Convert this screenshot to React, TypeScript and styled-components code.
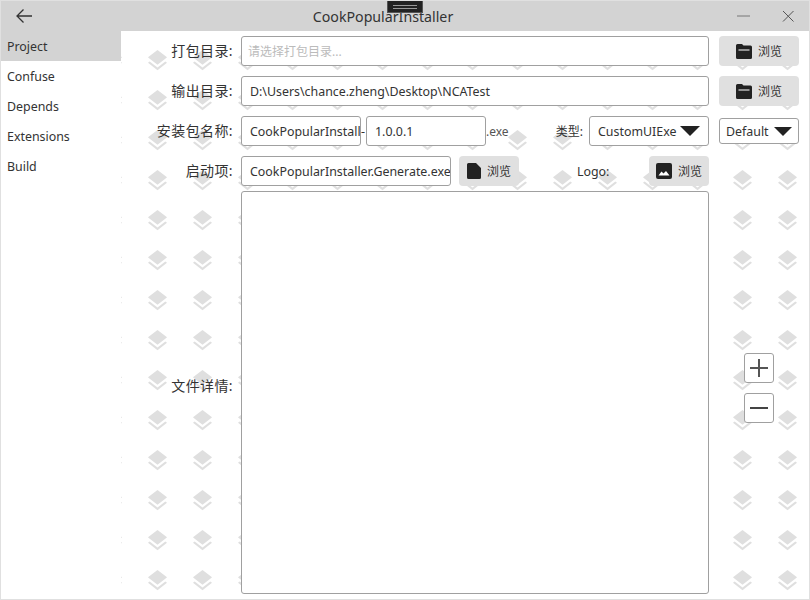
import React from 'react'
import styled, { createGlobalStyle } from 'styled-components'

const layersTile = encodeURIComponent(
  `<svg xmlns='http://www.w3.org/2000/svg' width='45' height='40'><path transform='translate(9.78 7.81) scale(1.06)' fill='#dfdfdf' d='M12 18.54l-7.37-5.73L3 14.07l9 7 9-7-1.63-1.27zM12 16l7.36-5.73L21 9l-9-7-9 7 1.63 1.27L12 16z'/></svg>`
)

const GlobalStyle = createGlobalStyle`
  html, body {
    margin: 0;
    padding: 0;
    background: #fff;
  }
  * {
    box-sizing: border-box;
  }
`

export default function App() {
  return (
    <>
      <GlobalStyle />
      <Window>
        <TitleBar>
          <BackIcon width='18' height='16' viewBox='0 0 18 16'>
            <path d='M17 8H2M8.5 1.5 2 8l6.5 6.5' fill='none' stroke='#333' strokeWidth='1.3' />
          </BackIcon>
          <Title>CookPopularInstaller</Title>
          <WindowControls>
            <svg width='14' height='12' viewBox='0 0 14 12'>
              <path d='M0 6h13' stroke='#777' strokeWidth='1' />
            </svg>
            <svg width='12' height='12' viewBox='0 0 12 12'>
              <path d='M1 1l10.5 10.5M11.5 1 1 11.5' stroke='#555' strokeWidth='1' fill='none' />
            </svg>
          </WindowControls>
          <DebugAdorner>
            <span />
            <span />
          </DebugAdorner>
        </TitleBar>
        <Body>
          <Sidebar>
            <NavItem $active>Project</NavItem>
            <NavItem>Confuse</NavItem>
            <NavItem>Depends</NavItem>
            <NavItem>Extensions</NavItem>
            <NavItem>Build</NavItem>
          </Sidebar>
          <Form>
            <Row>
              <Label>打包目录:</Label>
              <TextInput readOnly placeholder='请选择打包目录...' />
              <BrowseButton><FolderIcon />浏览</BrowseButton>
            </Row>
            <Row>
              <Label>输出目录:</Label>
              <TextInput readOnly value='D:\Users\chance.zheng\Desktop\NCATest' />
              <BrowseButton><FolderIcon />浏览</BrowseButton>
            </Row>
            <Row>
              <Label>安装包名称:</Label>
              <FieldGroup>
                <TextInput readOnly $width={120} value='CookPopularInstaller' />
                <Dash>-</Dash>
                <TextInput readOnly $width={120} value='1.0.0.1' />
                <Suffix>.exe</Suffix>
                <TypeLabel>类型:</TypeLabel>
                <SelectBox $width={120}>
                  CustomUIExe
                  <Caret width='20' height='10' viewBox='0 0 20 10'>
                    <path d='M0 0h20L10 10z' fill='#222' />
                  </Caret>
                </SelectBox>
              </FieldGroup>
              <ThemeSelect>
                Default
                <Caret width='18' height='9' viewBox='0 0 20 10'>
                  <path d='M0 0h20L10 10z' fill='#222' />
                </Caret>
              </ThemeSelect>
            </Row>
            <Row>
              <Label>启动项:</Label>
              <FieldGroup>
                <TextInput readOnly $width={210} value='CookPopularInstaller.Generate.exe' />
                <BrowseButton $width={60}>
                  <svg width='14' height='16' viewBox='0 0 14 16'>
                    <path d='M1.5 0H9l5 5v9.5a1.5 1.5 0 0 1-1.5 1.5h-11A1.5 1.5 0 0 1 0 14.500v-13A1.5 1.500 0 0 1 1.500 0z' fill='#222' />
                  </svg>
                  浏览
                </BrowseButton>
                <LogoLabel>Logo:</LogoLabel>
                <LogoButton $width={60}>
                  <svg width='16' height='16' viewBox='0 0 16 16'>
                    <rect width='16' height='16' rx='2' fill='#222' />
                    <path d='M2.500 12.500 5.500 8.500 7.500 10.500 10 8l3.500 4.500z' fill='#fff' />
                  </svg>
                  浏览
                </LogoButton>
              </FieldGroup>
            </Row>
            <DetailRow>
              <DetailLabel>文件详情:</DetailLabel>
              <DetailBox />
              <StepperColumn>
                <StepButton>
                  <svg width='20' height='20' viewBox='0 0 20 20'>
                    <path d='M10 1v18M1 10h18' stroke='#555' strokeWidth='2' />
                  </svg>
                </StepButton>
                <StepButton>
                  <svg width='20' height='20' viewBox='0 0 20 20'>
                    <path d='M1 10h18' stroke='#444' strokeWidth='2' />
                  </svg>
                </StepButton>
              </StepperColumn>
            </DetailRow>
          </Form>
        </Body>
      </Window>
    </>
  )
}

function FolderIcon() {
  return (
    <svg width='16' height='15' viewBox='0 0 16 15'>
      <path d='M1.500 0H6l1.500 1.500h7A1.500 1.500 0 0 1 16 3v10.500a1.500 1.500 0 0 1-1.500 1.500h-13A1.500 1.500 0 0 1 0 13.500v-12A1.500 1.500 0 0 1 1.500 0z' fill='#222' />
      <path d='M2.500 6h11' stroke='#e0e0e0' strokeWidth='1.200' />
    </svg>
  )
}

const Window = styled.div`
  background: #fff url("data:image/svg+xml,${layersTile}") -1px -1px repeat;
  border: 1px solid #e0e0e0;
  color: #333;
  display: flex;
  flex-direction: column;
  font-family: "Noto Sans", "Noto Sans CJK SC", sans-serif;
  font-size: 12.4px;
  height: 600px;
  overflow: hidden;
  width: 810px;
`

const TitleBar = styled.header`
  align-items: center;
  background: #d3d3d3;
  display: flex;
  flex: none;
  height: 30px;
  justify-content: center;
  position: relative;
`

const BackIcon = styled.svg`
  left: 14px;
  position: absolute;
  top: 7px;
`

const Title = styled.div`
  color: #333;
  font-size: 14.2px;
  margin-right: 44px;
`

const WindowControls = styled.div`
  align-items: center;
  display: flex;
  gap: 31px;
  position: absolute;
  right: 15px;
  top: 9px;
`

const DebugAdorner = styled.div`
  align-items: center;
  background: #222;
  border: 1px solid #555;
  display: flex;
  flex-direction: column;
  gap: 2px;
  height: 13px;
  justify-content: center;
  left: 386px;
  position: absolute;
  top: -1px;
  width: 36px;

  span {
    background: #999;
    display: block;
    height: 1px;
    width: 24px;
  }
`

const Body = styled.div`
  display: flex;
  flex: 1;
  min-height: 0;
`

const Sidebar = styled.nav`
  background: #fff;
  flex: none;
  width: 120px;
`

const NavItem = styled.div<{ $active?: boolean }>`
  align-items: center;
  background: ${p => (p.$active ? '#d3d3d3' : 'transparent')};
  display: flex;
  height: 30px;
  padding-left: 6px;
`

const Form = styled.main`
  display: flex;
  flex: 1;
  flex-direction: column;
  gap: 10px;
  padding: 5px 10px 5px 0;
`

const Row = styled.div`
  align-items: center;
  display: grid;
  flex: none;
  gap: 10px;
  grid-template-columns: 110px 468px 80px;
  height: 30px;
`

const Label = styled.label`
  font-size: 14px;
  letter-spacing: 0.4px;
  margin-right: -2px;
  padding-bottom: 2px;
  text-align: right;
`

const TextInput = styled.input<{ $width?: number }>`
  background: #fff;
  border: 1px solid #a0a0a0;
  border-radius: 3px;
  color: #333;
  flex: none;
  font: inherit;
  height: 30px;
  outline: none;
  padding: 0 0 0 8px;
  width: ${p => (p.$width ? `${p.$width}px` : '100%')};

  &:placeholder-shown {
    padding-left: 6px;
  }

  &::placeholder {
    color: #bbb;
    font-size: 12px;
    opacity: 1;
  }
`

const BrowseButton = styled.button<{ $width?: number }>`
  align-items: center;
  background: #e0e0e0;
  border: 0;
  border-radius: 4px;
  color: #333;
  display: flex;
  flex: none;
  font: inherit;
  font-size: 12px;
  gap: 6px;
  height: 30px;
  justify-content: center;
  padding: 0;
  width: ${p => (p.$width ? `${p.$width}px` : '100%')};
`

const LogoButton = styled(BrowseButton)`
  margin-left: auto;
`

const FieldGroup = styled.div`
  align-items: center;
  display: flex;
  gap: 8px;
  height: 30px;

  ${TextInput} + span {
    margin-left: -8px;
  }
`

const Dash = styled.span`
  margin-right: -8px;
  overflow: hidden;
  width: 5px;
`

const Suffix = styled.span`
  color: #555;
  font-size: 12px;
`

const TypeLabel = styled.label`
  font-size: 12px;
  margin-left: auto;
  margin-right: -2px;
`

const SelectBox = styled.div<{ $width: number }>`
  align-items: center;
  background: #fff;
  border: 1px solid #a0a0a0;
  border-radius: 3px;
  display: flex;
  flex: none;
  height: 30px;
  justify-content: space-between;
  padding: 0 8px;
  width: ${p => p.$width}px;
`

const ThemeSelect = styled(SelectBox).attrs({ $width: 80 })`
  height: 26px;
  padding: 0 6px;
`

const Caret = styled.svg`
  flex: none;
`

const LogoLabel = styled.span`
  margin-left: 50px;
`

const DetailRow = styled(Row)`
  flex: 1;
  height: auto;
  margin-top: -5px;
`

const DetailLabel = styled(Label)`
  padding-bottom: 15px;
`

const DetailBox = styled.div`
  background: #fff;
  border: 1px solid #a0a0a0;
  border-radius: 3px;
  height: 100%;
`

const StepperColumn = styled.div`
  align-items: center;
  display: flex;
  flex-direction: column;
  gap: 10px;
  padding-bottom: 10px;
`

const StepButton = styled.button`
  align-items: center;
  background: #fff;
  border: 1px solid #a0a0a0;
  border-radius: 3px;
  display: flex;
  height: 30px;
  justify-content: center;
  padding: 0;
  width: 30px;
`
